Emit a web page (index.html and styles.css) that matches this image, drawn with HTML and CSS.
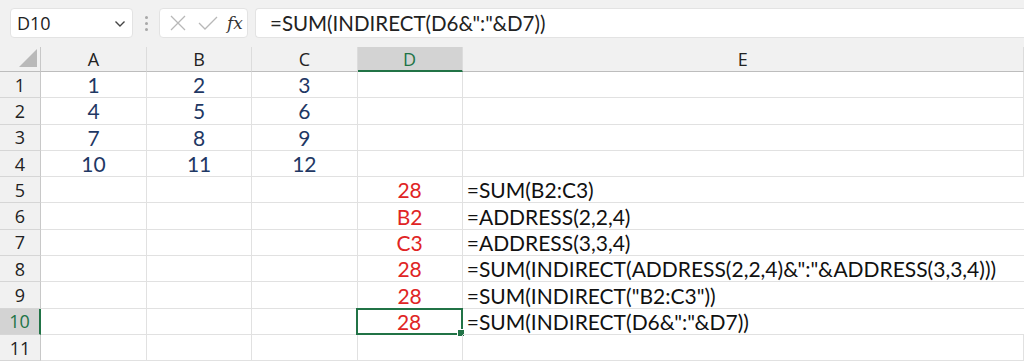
FILE: index.html
```html
<!DOCTYPE html>
<html lang="en">
<head>
    <meta charset="UTF-8">
    <title>INDIRECT + ADDRESS</title>
    <link rel="stylesheet" href="styles.css">
</head>
<body>
    <div class="toolbar">
        <div class="name-box">
            <span>D10</span>
            <svg class="chevron" width="12" height="8" viewBox="0 0 12 8"><path d="M1.5 1.5 L6 6 L10.5 1.5" fill="none" stroke="#444" stroke-width="1.4"/></svg>
        </div>
        <div class="grip"><i></i><i></i><i></i></div>
        <div class="fx-box">
            <svg width="18" height="18" viewBox="0 0 18 18"><path d="M2 2 L16 16 M16 2 L2 16" stroke="#b8b8b8" stroke-width="1.3" fill="none"/></svg>
            <svg width="22" height="18" viewBox="0 0 22 18"><path d="M2 9 L8 15 L20 3" stroke="#b8b8b8" stroke-width="1.3" fill="none"/></svg>
            <span class="fx">fx</span>
        </div>
        <div class="formula">=SUM(INDIRECT(D6&amp;":"&amp;D7))</div>
    </div>

    <div class="sheet">
        <div class="corner"><span class="tri"></span></div>
        <div class="col-head">A</div>
        <div class="col-head">B</div>
        <div class="col-head">C</div>
        <div class="col-head active">D</div>
        <div class="col-head">E</div>

        <div class="row-head">1</div>
        <div class="cell num">1</div><div class="cell num">2</div><div class="cell num">3</div><div class="cell"></div><div class="cell"></div>
        <div class="row-head">2</div>
        <div class="cell num">4</div><div class="cell num">5</div><div class="cell num">6</div><div class="cell"></div><div class="cell"></div>
        <div class="row-head">3</div>
        <div class="cell num">7</div><div class="cell num">8</div><div class="cell num">9</div><div class="cell"></div><div class="cell"></div>
        <div class="row-head">4</div>
        <div class="cell num">10</div><div class="cell num">11</div><div class="cell num">12</div><div class="cell"></div><div class="cell"></div>
        <div class="row-head">5</div>
        <div class="cell"></div><div class="cell"></div><div class="cell"></div><div class="cell res">28</div><div class="cell text">=SUM(B2:C3)</div>
        <div class="row-head">6</div>
        <div class="cell"></div><div class="cell"></div><div class="cell"></div><div class="cell res">B2</div><div class="cell text">=ADDRESS(2,2,4)</div>
        <div class="row-head">7</div>
        <div class="cell"></div><div class="cell"></div><div class="cell"></div><div class="cell res">C3</div><div class="cell text">=ADDRESS(3,3,4)</div>
        <div class="row-head">8</div>
        <div class="cell"></div><div class="cell"></div><div class="cell"></div><div class="cell res">28</div><div class="cell text">=SUM(INDIRECT(ADDRESS(2,2,4)&amp;":"&amp;ADDRESS(3,3,4)))</div>
        <div class="row-head">9</div>
        <div class="cell"></div><div class="cell"></div><div class="cell"></div><div class="cell res">28</div><div class="cell text">=SUM(INDIRECT("B2:C3"))</div>
        <div class="row-head active">10</div>
        <div class="cell"></div><div class="cell"></div><div class="cell"></div><div class="cell res selected">28<span class="handle"></span></div><div class="cell text">=SUM(INDIRECT(D6&amp;":"&amp;D7))</div>
        <div class="row-head">11</div>
        <div class="cell"></div><div class="cell"></div><div class="cell"></div><div class="cell"></div><div class="cell"></div>
    </div>
</body>
</html>
```

FILE: styles.css
```css
body {
    margin: 0;
    background: #fff;
    font-family: "Open Sans", "Noto Sans", sans-serif;
    overflow: hidden;
}
.toolbar {
    display: flex;
    align-items: flex-start;
    height: 47px;
    padding: 8px 0 0 10px;
    box-sizing: border-box;
    background: #f1f1f1;
}
.name-box {
    display: flex;
    align-items: center;
    justify-content: space-between;
    width: 123px;
    height: 30px;
    box-sizing: border-box;
    padding: 0 6px 0 6px;
    background: #fff;
    border: 1px solid #e3e3e3;
    border-radius: 4px;
    font-size: 18px;
    color: #222;
}
.chevron {
    margin-top: 2px;
}
.grip {
    display: flex;
    flex-direction: column;
    justify-content: center;
    gap: 3px;
    width: 26px;
    height: 30px;
    align-items: center;
}
.grip i {
    width: 3px;
    height: 3px;
    border-radius: 50%;
    background: #a8a8a8;
}
.fx-box {
    display: flex;
    align-items: center;
    gap: 10px;
    width: 89px;
    height: 30px;
    box-sizing: border-box;
    padding: 0 0 0 9px;
    background: #fff;
    border: 1px solid #e3e3e3;
    border-radius: 4px;
}
.fx {
    font-family: "DejaVu Serif", "Liberation Serif", serif;
    font-style: italic;
    font-size: 17px;
    color: #333;
    margin-left: -2px;
}
.formula {
    flex: 1;
    height: 30px;
    box-sizing: border-box;
    margin-left: 7px;
    padding: 0 14px;
    background: #fff;
    border: 1px solid #e3e3e3;
    border-right: 0;
    border-radius: 4px 0 0 4px;
    font-family: "Lato", sans-serif;
    font-size: 20.5px;
    line-height: 28px;
    color: #222;
}
.sheet {
    display: grid;
    grid-template-columns: 41px 106px 105.25px 105.25px 105.25px 1fr;
    grid-template-rows: 25px repeat(11, 26.3px);
    font-family: "Lato", sans-serif;
}
.corner {
    position: relative;
    background: #f1f1f1;
    border-right: 1px solid #c8c8c8;
    border-bottom: 1px solid #bdbdbd;
}
.tri {
    position: absolute;
    right: 3px;
    bottom: 4px;
    width: 0;
    height: 0;
    border-left: 18px solid transparent;
    border-bottom: 18px solid #b9b9b9;
}
.col-head {
    display: flex;
    align-items: center;
    justify-content: center;
    background: #f1f1f1;
    border-right: 1px solid #dcdcdc;
    border-bottom: 1px solid #bdbdbd;
    font-family: "Open Sans", sans-serif;
    font-size: 18px;
    color: #222;
}
.col-head.active {
    background: #d3d3d3;
    color: #217346;
    border-bottom: 2px solid #217346;
}
.row-head {
    display: flex;
    align-items: center;
    justify-content: center;
    background: #f1f1f1;
    border-right: 1px solid #c8c8c8;
    border-bottom: 1px solid #d6d6d6;
    font-family: "Open Sans", sans-serif;
    font-size: 18px;
    color: #222;
}
.row-head.active {
    background: #d3d3d3;
    color: #217346;
    border-right: 2px solid #217346;
}
.cell {
    position: relative;
    display: flex;
    align-items: center;
    justify-content: center;
    box-sizing: border-box;
    border-right: 1px solid #e1e1e1;
    border-bottom: 1px solid #e1e1e1;
    font-size: 21px;
    white-space: nowrap;
}
.num {
    color: #1f3864;
}
.res {
    color: #e02424;
}
.text {
    justify-content: flex-start;
    padding-left: 4px;
    color: #111;
    border-right: 0;
}
.selected {
    border: 2px solid #217346;
    margin: -1px 0 0 -2px;
}
.handle {
    position: absolute;
    right: -4px;
    bottom: -4px;
    width: 6px;
    height: 6px;
    background: #217346;
    border: 1px solid #fff;
}
```
